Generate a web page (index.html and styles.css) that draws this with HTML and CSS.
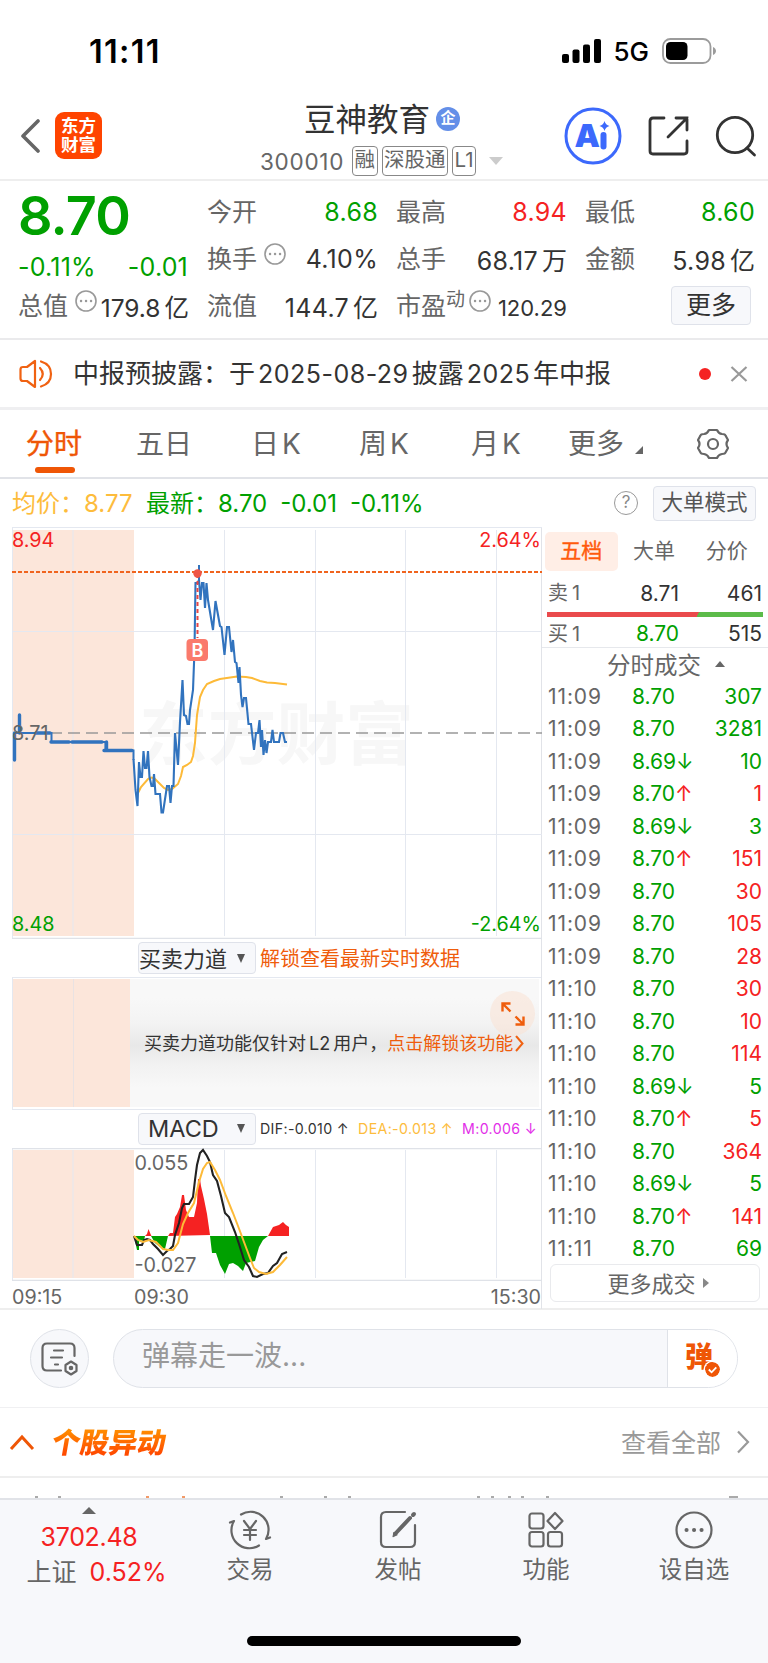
FILE: index.html
```html
<!DOCTYPE html>
<html lang="zh-CN">
<head>
    <meta charset="UTF-8">
    <meta name="viewport" content="width=device-width, initial-scale=1.0">
    <title>豆神教育 300010</title>
    <link rel="stylesheet" href="styles.css">
</head>
<body>
    <!-- Status bar -->
    <div class="status-bar">
        <span class="status-time">11:11</span>
        <div class="status-right">
            <svg width="39" height="24" viewBox="0 0 39 24"><rect x="0" y="15" width="7" height="9" rx="2"/><rect x="10.500" y="10.500" width="7" height="13.500" rx="2"/><rect x="21" y="5.500" width="7" height="18.500" rx="2"/><rect x="32" y="0" width="7" height="24" rx="2"/></svg>
            <span class="status-net">5G</span>
            <svg width="54" height="26" viewBox="0 0 54 26"><rect x="1" y="1" width="47.500" height="24" rx="7.500" fill="none" stroke="#9b9b9b" stroke-width="1.800"/><rect x="4" y="4" width="21.500" height="18" rx="4.500"/><path d="M51 9c4 2 4 6 0 8z" fill="#9b9b9b"/></svg>
        </div>
    </div>

    <!-- Header -->
    <div class="header">
        <div class="header-left">
            <svg width="20" height="34" viewBox="0 0 20 34"><path d="M18 2L3 17l15 15" fill="none" stroke="#666" stroke-width="3.600" stroke-linecap="round" stroke-linejoin="round"/></svg>
            <div class="logo"><span>东方</span><span>财富</span></div>
        </div>
        <div class="header-title">
            <div class="stock-name">豆神教育<span class="corp">企</span></div>
            <div class="stock-code">300010<span class="tag tag-first">融</span><span class="tag">深股通</span><span class="tag">L1</span><i class="drop"></i></div>
        </div>
        <div class="header-right">
            <svg width="58" height="58" viewBox="0 0 58 58"><circle cx="29" cy="29" r="27" fill="none" stroke="#3c69fc" stroke-width="3"/><text x="10.500" y="40" class="ai-text">A</text><path d="M39.500 28v11.500" stroke="#3c69fc" stroke-width="6" stroke-linecap="round"/><path d="M40.500 14q1 4 5 5-4 1-5 5-1-4-5-5 4-1 5-5z" fill="#3c69fc"/></svg>
            <svg width="42" height="42" viewBox="0 0 42 42" fill="none" stroke="#333" stroke-width="2.800" stroke-linecap="round"><path d="M16 3H5Q2 3 2 6v30q0 3 3 3h31q3 0 3-3V26M20 22L39 3M28 3h11v12"/></svg>
            <svg width="42" height="42" viewBox="0 0 42 42" fill="none" stroke="#333" stroke-width="2.800" stroke-linecap="round"><circle cx="20" cy="20" r="17.700"/><path d="M32 33l7.500 7"/></svg>
        </div>
    </div>

    <!-- Quote -->
    <div class="quote">
        <div class="quote-main">
            <div class="price green">8.70</div>
            <div class="change green"><span>-0.11%</span><span>-0.01</span></div>
            <div class="cell"><label>总值</label><svg class="more-dot" viewBox="0 0 22 22"><circle cx="11" cy="11" r="10"/><path d="M6 11h.1M11 11h.1M16 11h.1"/></svg><b class="num-small">179.8<em>亿</em></b></div>
        </div>
        <div class="quote-col">
            <div class="cell"><label>今开</label><b class="green">8.68</b></div>
            <div class="cell"><label>换手</label><svg class="more-dot" viewBox="0 0 22 22"><circle cx="11" cy="11" r="10"/><path d="M6 11h.1M11 11h.1M16 11h.1"/></svg><b>4.10%</b></div>
            <div class="cell"><label>流值</label><b>144.7<em>亿</em></b></div>
        </div>
        <div class="quote-col">
            <div class="cell"><label>最高</label><b class="red">8.94</b></div>
            <div class="cell"><label>总手</label><b>68.17<em>万</em></b></div>
            <div class="cell"><label>市盈<sup>动</sup></label><svg class="more-dot near" viewBox="0 0 22 22"><circle cx="11" cy="11" r="10"/><path d="M6 11h.1M11 11h.1M16 11h.1"/></svg><b class="num-tiny">120.29</b></div>
        </div>
        <div class="quote-col">
            <div class="cell"><label>最低</label><b class="green">8.60</b></div>
            <div class="cell"><label>金额</label><b>5.98<em>亿</em></b></div>
            <div class="cell"><button class="btn-more">更多</button></div>
        </div>
    </div>

    <!-- Notice -->
    <div class="notice">
        <svg width="34" height="30" viewBox="0 0 34 30" fill="none" stroke="#f06212" stroke-width="2.200" stroke-linejoin="round" stroke-linecap="round"><path d="M16 2v26L8 22H4q-2.500 0-2.500-2.500v-9Q1.500 8 4 8h4zM21 9q5.500 6 0 12M22 2.500q10 3 10 12.500T22 27.500"/></svg>
        <span class="notice-text">中报预披露：于<em>2025-08-29</em>披露<em>2025</em>年中报</span>
        <i class="dot"></i>
        <svg width="18" height="18" viewBox="0 0 18 18"><path d="M1.500 2l15 14M16.500 2l-15 14" stroke="#999" stroke-width="2.200"/></svg>
    </div>

    <!-- Tabs -->
    <div class="tabs">
        <span class="tab active">分时</span>
        <span class="tab">五日</span>
        <span class="tab">日<em>K</em></span>
        <span class="tab">周<em>K</em></span>
        <span class="tab">月<em>K</em></span>
        <span class="tab">更多<i class="corner"></i></span>
        <svg width="32" height="32" viewBox="0 0 32 32" fill="none" stroke="#666" stroke-width="2.200" stroke-linejoin="round"><path d="M12 2h8q1.500 3.500 5 4 3 0 3.500 1.500L31 12q-3 4 0 8l-2.500 4.500Q28 26 25 26q-3.500.500-5 4h-8q-1.500-3.500-5-4-3 0-3.500-1.500L1 20q3-4 0-8l2.500-4.500Q4 6 7 6q3.500-.500 5-4z"/><circle cx="16" cy="16" r="5"/></svg>
    </div>

    <!-- Average / last -->
    <div class="info">
        <span class="avg">均价：<em>8.77</em></span>
        <span class="last green">最新：<em>8.70</em><em>-0.01</em><em>-0.11%</em></span>
        <span class="help">?</span>
        <button class="btn-mode">大单模式</button>
    </div>

    <div class="market">
        <div class="charts">
            <svg class="chart" width="530" height="412" viewBox="12 527 530 412">
                <rect x="12" y="530" width="122" height="406" fill="#fce6da"/>
                <text x="139" y="759" class="watermark" textLength="275" lengthAdjust="spacingAndGlyphs">东方财富</text>
                <path d="M12 527.500h530M12.500 527v412M12 631.500h530M12 834.500h530M73 530v406M224.500 530v406M315.500 530v406M405.500 530v406M496.500 530v406" class="grid"/>
                <path d="M12 938.500h530" class="frame"/>
                <path d="M12 572h530" stroke="#f0641e" stroke-width="2" stroke-dasharray="4 2"/>
                <path d="M14 733h528" stroke="#999" stroke-width="1.600" stroke-dasharray="12 6"/>
                <polyline class="line-avg" points="138,793 141,787 148,779 151,777.500 154,778 158,782 164,788 168,790 172,789 178,784 181,776 183,767 187,765 191,762 193,756 195,743 197,715 200,697 203,690 207,684 214,681 220,679 237,676.500 246,677 252,678 260,681 267,682.500 275,683 287,684.500"/>
                <path class="line-pre" d="M14.500 760V733"/>
                <path class="line-pre" d="M19.500 733V715"/>
                <path class="line-step" d="M14 733H51.500V742H105.500V750.500H133.500V760"/>
                <path class="line-pre" d="M36 733h14M51 742h18M72 742h30M106.500 742v8.500M104 750.500h28"/>
                <polyline class="line-price" points="133.500,759 135.500,790 137.500,806 139,762 140.500,777 142,777 143.500,751 145,768 146.500,768 148,751 149.500,777 151.500,786 153,786 154,774 155.500,794 160,794 161.500,812.500 163,812.500 167,786 169,786 170.500,803 172,786 173.500,786 175,733 178,765 180,722 182.500,680 184,715 186,716 187.500,724 189,724 190,710 193,690 194.500,650 195.500,583 197.500,583 199,580 200.500,600 202,583 203.500,583 205,608 206.500,583 208,600 213,630 215.500,601 220,626 221.500,627 224.500,655 227,627 229,627 231.500,652 233,640 235,662 236.500,663 238.500,683 239.500,667 241,695 242.500,707 244,698 246,698 248.500,724 251,724 254,750 256,733 258,733 259.500,720 261,747 262,730 263.500,755 265,740 266.500,753 268,742 271,742 272.500,730 274,742 279,742 280.500,733 283,733 285,742 287,742"/>
                <path d="M199 565v18" stroke="#3173be" stroke-width="2"/>
                <path d="M197.500 574v64" stroke="#e64545" stroke-width="2" stroke-dasharray="4 3"/>
                <circle cx="197.500" cy="573.500" r="4.200" fill="#ee5647"/>
                <rect x="186.500" y="639" width="21.500" height="22" rx="4" fill="#fa7a6c"/>
                <text x="197.500" y="657" class="buy">B</text>
                <text x="12" y="547" class="axis" fill="#f52222">8.94</text>
                <text x="12" y="740" class="axis" fill="#666">8.71</text>
                <text x="12" y="931" class="axis" fill="#00a000">8.48</text>
                <text x="541" y="547" class="axis end" fill="#f52222">2.64%</text>
                <text x="541" y="931" class="axis end" fill="#00a000">-2.64%</text>
            </svg>

            <div class="sub-head">
                <span class="select"><em>买卖力道</em><i class="caret"></i></span>
                <span class="unlock">解锁查看最新实时数据</span>
            </div>
            <div class="force">
                <div class="force-pre"></div>
                <div class="force-body">
                    <span>买卖力道功能仅针对<em>L2</em>用户，<a>点击解锁该功能<svg width="9" height="17" viewBox="0 0 9 17"><path d="M1 1l6.500 7.500L1 16" fill="none" stroke="#f06212" stroke-width="2"/></svg></a></span>
                    <div class="expand"><svg width="24" height="24" viewBox="0 0 24 24" fill="none" stroke="#ef5d0c" stroke-width="2.400"><path d="M1.500 9.500v-8h8M1.500 1.500l8 8M22.500 14.500v8h-8M22.500 22.500l-8-8"/></svg></div>
                </div>
            </div>
            <div class="sub-head macd-head">
                <span class="select macd">MACD<i class="caret"></i></span>
                <span class="macd-vals"><span>DIF:-0.010 ↑</span><span class="dea">DEA:-0.013 ↑</span><span class="m">M:0.006 ↓</span></span>
            </div>
            <svg class="chart" width="530" height="133" viewBox="12 1148 530 133">
                <rect x="12" y="1150" width="122" height="128" fill="#fce6da"/>
                <path d="M12.500 1148v133M73 1150v128M224.500 1150v128M315.500 1150v128M405.500 1150v128M496.500 1150v128" class="grid"/>
                <path d="M12 1148.500h530M12 1280.500h530" class="frame"/>
                <path fill="#f52222" d="M145 1236l2-2 1.500-5 2 5 1 2zM168 1236l2-3h3l2-16 2-3 3-7 2-12h2l2 15 3 7h5l3-14 1-24h2l1 7 3 13 3 15 3 21zM268 1236l5-9 6-2 4-3 3 3 3 2v9z"/>
                <path fill="#00a000" d="M134 1236l3 14h2v-10l5 1 1-5zM151 1236l4 7 5 4 5 2 3-13zM210 1236l2 17h4l4 12 5 9 4-10 4-1 5 3 5 5 3-8 9-2 4-14 4-7 5-4z"/>
                <polyline class="line-dif" points="134,1236 137,1245 142,1245 144,1240 147,1239 150,1240 153,1244 158,1249 163,1255 167,1251 170,1249 173,1246 175,1235 179,1223 182,1208 184,1204 189,1204 193,1197 195,1180 197,1165 200,1153 203,1150 207,1156 210,1162 213,1175 217,1181 221,1196 225,1213 229,1217 235,1232 239,1244 244,1260 249,1267 253,1276 257,1277 263,1274 268,1273 273,1266 277,1263 282,1254 287,1252"/>
                <polyline class="line-avg" points="134,1236 138,1240 143,1242 149,1240 156,1242 163,1249 168,1250 173,1250 178,1243 183,1224 188,1213 194,1203 199,1182 203,1169 207,1163 210,1162 215,1170 220,1180 226,1196 233,1213 238,1226 244,1242 250,1258 254,1268 259,1272 266,1274 273,1272 280,1265 287,1257"/>
                <text x="134.500" y="1170" class="axis" fill="#666">0.055</text>
                <text x="134.500" y="1272" class="axis" fill="#666">-0.027</text>
            </svg>
            <div class="times"><span>09:15</span><span>09:30</span><span>15:30</span></div>
        </div>

        <div class="side">
            <div class="side-tabs"><span class="side-tab active">五档</span><span class="side-tab">大单</span><span class="side-tab">分价</span></div>
            <div class="level"><span>卖<em>1</em></span><b>8.71</b><b>461</b></div>
            <div class="ratio"></div>
            <div class="level buy-level"><span>买<em>1</em></span><b class="green">8.70</b><b>515</b></div>
            <div class="side-title">分时成交<i class="up"></i></div>
            <div class="trades">
                <div class="trade"><span>11:09</span><b>8.70</b><b class="green">307</b></div>
                <div class="trade"><span>11:09</span><b>8.70</b><b class="green">3281</b></div>
                <div class="trade"><span>11:09</span><b>8.69<i class="down">↓</i></b><b class="green">10</b></div>
                <div class="trade"><span>11:09</span><b>8.70<i class="rise">↑</i></b><b class="red">1</b></div>
                <div class="trade"><span>11:09</span><b>8.69<i class="down">↓</i></b><b class="green">3</b></div>
                <div class="trade"><span>11:09</span><b>8.70<i class="rise">↑</i></b><b class="red">151</b></div>
                <div class="trade"><span>11:09</span><b>8.70</b><b class="red">30</b></div>
                <div class="trade"><span>11:09</span><b>8.70</b><b class="red">105</b></div>
                <div class="trade"><span>11:09</span><b>8.70</b><b class="red">28</b></div>
                <div class="trade"><span>11:10</span><b>8.70</b><b class="red">30</b></div>
                <div class="trade"><span>11:10</span><b>8.70</b><b class="red">10</b></div>
                <div class="trade"><span>11:10</span><b>8.70</b><b class="red">114</b></div>
                <div class="trade"><span>11:10</span><b>8.69<i class="down">↓</i></b><b class="green">5</b></div>
                <div class="trade"><span>11:10</span><b>8.70<i class="rise">↑</i></b><b class="red">5</b></div>
                <div class="trade"><span>11:10</span><b>8.70</b><b class="red">364</b></div>
                <div class="trade"><span>11:10</span><b>8.69<i class="down">↓</i></b><b class="green">5</b></div>
                <div class="trade"><span>11:10</span><b>8.70<i class="rise">↑</i></b><b class="red">141</b></div>
                <div class="trade"><span>11:11</span><b>8.70</b><b class="green">69</b></div>
            </div>
            <button class="btn-trades"><span>更多成交</span><i class="right"></i></button>
        </div>
    </div>

    <!-- Comment bar -->
    <div class="comment">
        <div class="comment-set">
            <svg width="38" height="34" viewBox="0 0 38 34" fill="none" stroke="#666" stroke-width="2.200" stroke-linecap="round" stroke-linejoin="round"><path d="M33.500 14V6q0-4.500-4.500-4.500H6Q1.500 1.500 1.500 6v18q0 4.500 4.500 4.500h14M13 8.500h9M10 15.500h11M14 22.500h3M30 19.500l5.500 3.500v6L30 32.500 24.500 29v-6z"/><circle cx="30" cy="26" r="1.200"/></svg>
        </div>
        <div class="comment-input">
            <span>弹幕走一波...</span>
            <div class="danmu">弹<svg width="15" height="15" viewBox="0 0 15 15"><circle cx="7.500" cy="7.500" r="7.500" fill="#ef5606"/><path d="M3.800 7.500l2.800 2.800 4.700-5" fill="none" stroke="#fff" stroke-width="1.800"/></svg></div>
        </div>
    </div>

    <!-- Stock alerts -->
    <div class="alerts">
        <svg width="26" height="17" viewBox="0 0 26 17"><path d="M2 15L13 3l11 12" fill="none" stroke="#ef5606" stroke-width="3"/></svg>
        <span class="alerts-title">个股异动</span>
        <span class="alerts-all">查看全部</span>
        <svg width="14" height="24" viewBox="0 0 14 24"><path d="M2 1.500L12 12 2 22.500" fill="none" stroke="#999" stroke-width="2.200"/></svg>
    </div>
    <div class="peek">
        <svg width="768" height="2" viewBox="0 0 768 2"><path d="M35 1h3M58 1h3M280 1h3M324 1h3M348 1h3M477 1h3M491 1h3M508 1h3M521 1h3M546 1h3M729 1h9" stroke="#aaa" stroke-width="2"/><path d="M146 1h3M182 1h3" stroke="#f29a68" stroke-width="2"/></svg>
    </div>

    <!-- Bottom bar -->
    <div class="bottom">
        <div class="index">
            <i class="up"></i>
            <span class="red">3702.48</span>
            <div>上证<b class="red">0.52%</b></div>
        </div>
        <div class="nav">
            <div class="nav-item">
                <svg width="44" height="40" viewBox="0 0 44 40" fill="none" stroke="#666" stroke-width="2.200" stroke-linecap="round" stroke-linejoin="round"><path d="M13 4.500A18 18 0 0 1 38 29l4-1.500M31 35.500A18 18 0 0 1 6 11l-4 1.500M16 11l6 8 6-8M22 19v11M16 20h12M16 25h12"/></svg>
                <span>交易</span>
            </div>
            <div class="nav-item">
                <svg width="40" height="40" viewBox="0 0 40 40" fill="none" stroke="#666" stroke-width="2.200" stroke-linecap="round"><path d="M27 2H8Q3 2 3 7v25q0 5 5 5h24q5 0 5-5V15"/><path d="M17 24L32 8" stroke-width="4"/><path d="M15 26.500l1-4.500 3 2.500z" fill="#666" stroke-width="1"/><path d="M35 5l1-1" stroke-width="4"/></svg>
                <span>发帖</span>
            </div>
            <div class="nav-item">
                <svg width="40" height="40" viewBox="0 0 40 40" fill="none" stroke="#666" stroke-width="2.200" stroke-linejoin="round"><rect x="3.500" y="3.500" width="14" height="15" rx="2.500"/><rect x="3.500" y="22" width="14" height="14.500" rx="2.500"/><rect x="22" y="22" width="14" height="14.500" rx="2.500"/><path d="M29 3l7.500 8L29 19l-7.500-8z"/></svg>
                <span>功能</span>
            </div>
            <div class="nav-item">
                <svg width="40" height="40" viewBox="0 0 40 40" fill="none" stroke="#666" stroke-width="2.200"><circle cx="20" cy="20" r="17.500"/><path d="M12.500 20h.1M20 20h.1M27.500 20h.1" stroke-width="4" stroke-linecap="round"/></svg>
                <span>设自选</span>
            </div>
        </div>
        <div class="home"></div>
    </div>
</body>
</html>
```
FILE: styles.css
```css
* { box-sizing: border-box; }
body { margin: 0; width: 768px; height: 1663px; overflow: hidden; background: #fff; color: #333; font-family: Inter, "Noto Sans CJK SC", sans-serif; }
em, i, b { font-style: normal; font-weight: 400; }
svg { display: block; flex: none; }
button { font-family: inherit; padding: 0; background: #f7f8fb; border: 1.5px solid #dfe2ea; border-radius: 4px; color: #333; }
.green { color: #00a000; }
.red { color: #f52222; }

.status-bar { height: 92px; padding: 12px 52px 0 89px; display: flex; justify-content: space-between; align-items: center; color: #000; }
.status-time { font-size: 32.5px; font-weight: 600; letter-spacing: 1.3px; line-height: 40px; }
.status-right { display: flex; align-items: center; margin-top: -2px; }
.status-net { font-size: 26px; font-weight: 500; margin: 1px 13px 0 12px; }

.header { height: 89px; border-bottom: 2px solid #eee; display: grid; grid-template-columns: 180px 1fr 204px; }
.header-left { display: flex; align-items: center; gap: 15px; padding: 0 0 1px 20px; height: 88px; }
.logo { width: 47px; height: 47px; border-radius: 9px; background: #ff4400; color: #fff; display: flex; flex-direction: column; align-items: center; justify-content: center; font-size: 17.5px; line-height: 19px; font-weight: 700; padding-bottom: 1px; }
.header-title { padding-left: 80px; white-space: nowrap; }
.stock-name { display: flex; align-items: center; height: 48px; padding: 1px 0 0 44px; font-size: 31.5px; }
.corp { width: 24px; height: 24px; margin: 4px 0 0 6px; border-radius: 50%; background: #648fe8; color: #fff; font-size: 15px; line-height: 22px; font-weight: 700; text-align: center; }
.stock-code { display: flex; align-items: center; height: 42px; font-size: 22.5px; letter-spacing: 0.7px; color: #666; }
.tag { height: 30px; line-height: 26px; padding: 0 1.5px; border: 1.5px solid #888; border-radius: 4px; font-size: 20.5px; letter-spacing: 0; margin-left: 4px; }
.tag-first { margin-left: 8px; }
.drop { border: 7px solid transparent; border-top: 8px solid #ccc; border-bottom: 0; margin-left: 13px; }
.header-right { display: flex; align-items: center; gap: 25.5px; height: 88px; }
.ai-text { font-size: 32px; font-weight: 900; fill: #3c69fc; }

.quote { height: 159px; padding: 7px 14px 0 18px; border-bottom: 2px solid #eaeaec; display: grid; grid-template-columns: 170px 169px 169px 168px; column-gap: 20px; }
.price { height: 57px; line-height: 56px; font-size: 54px; font-weight: 600; letter-spacing: -0.8px; }
.change { display: flex; justify-content: space-between; height: 37px; line-height: 44px; font-size: 25px; letter-spacing: 0.2px; }
.cell { display: flex; align-items: center; height: 47px; font-size: 25px; white-space: nowrap; }
.cell label { color: #666; padding-bottom: 3px; margin-left: -1px; }
.quote-main .cell label { margin-left: 0; }
.cell b { margin: 0 -1px 0 auto; letter-spacing: 0.3px; }
.cell b em { margin-left: 4px; letter-spacing: 0; }
.cell .num-small { font-size: 24.5px; padding-top: 2px; letter-spacing: 0; }
.cell .num-tiny { font-size: 22px; padding-top: 4px; letter-spacing: 0; }
.cell sup { font-size: 19px; line-height: 0; vertical-align: 9px; }
.more-dot { width: 22px; height: 22px; margin: -9px 0 0 7px; fill: none; stroke: #999; stroke-width: 1.6; }
.more-dot path { stroke-width: 2.4; stroke-linecap: round; }
.more-dot.near { margin-left: 4px; }
.btn-more { width: 80px; height: 39px; margin-left: 85px; font-size: 25px; line-height: 34px; padding-bottom: 2px; }

.notice { height: 70px; border-bottom: 3px solid #efeff1; display: flex; align-items: center; padding: 0 20px 0 19px; }
.notice-text { margin-left: 20px; font-size: 26px; white-space: nowrap; padding-bottom: 4px; }
.notice-text em { font-size: 25px; margin: 0 3px; letter-spacing: 0.5px; }
.dot { width: 12px; height: 12px; border-radius: 50%; background: #f52222; margin: 0 19px 0 auto; }

.tabs { height: 69px; border-bottom: 2px solid #e1e3e8; display: grid; grid-template-columns: 110px 115px 108px 112px 97px 129px 32px; align-items: center; padding-left: 26px; font-size: 28px; color: #666; }
.tab { position: relative; white-space: nowrap; padding-bottom: 3px; }
.tab em { margin-left: 3px; }
.tab.active { color: #ef5606; -webkit-text-stroke: 0.4px #ef5606; }
.tab.active::after { content: ""; position: absolute; left: 9px; bottom: -8px; width: 40px; height: 6px; border-radius: 3px; background: #ef5606; }
.corner { display: inline-block; margin-left: 11px; border-left: 8px solid transparent; border-bottom: 8px solid #666; }

.info { height: 48px; display: flex; align-items: center; padding: 0 12px 0 12px; font-size: 24px; white-space: nowrap; }
.avg, .last { padding-bottom: 3px; }
.avg { width: 134px; color: #fdbc3c; }
.info em { margin-right: 13px; }
.help { width: 24px; height: 24px; border: 1.6px solid #999; border-radius: 50%; color: #888; font-size: 17px; line-height: 21px; text-align: center; margin: 0 15px 0 auto; }
.btn-mode { width: 103px; height: 35px; font-size: 21.5px; line-height: 30px; color: #555; padding-bottom: 2px; }

.market { height: 783px; display: grid; grid-template-columns: 530px 226px; padding-left: 12px; border-bottom: 2px solid #eee; }
.charts { border-right: 1.5px solid #e1e3e8; }
.grid { stroke: #e4e8f0; stroke-width: 1; fill: none; }
.frame { stroke: #dfe2e8; stroke-width: 1.5; fill: none; }
.watermark { font-size: 68px; font-weight: 700; fill: #f7f7f7; }
.line-avg { fill: none; stroke: #fdba38; stroke-width: 2; }
.line-price { fill: none; stroke: #3173be; stroke-width: 2.1; }
.line-step { fill: none; stroke: #3173be; stroke-width: 2; }
.line-pre { fill: none; stroke: #3173be; stroke-width: 3.4; stroke-linecap: round; }
.line-dif { fill: none; stroke: #222; stroke-width: 2.1; }
.buy { font-size: 18px; font-weight: 600; fill: #fff; text-anchor: middle; }
.axis { font-size: 19.8px; }
.end { text-anchor: end; }

.sub-head { height: 38px; display: flex; align-items: center; padding-left: 126px; white-space: nowrap; }
.select { width: 118px; height: 32px; flex: none; border: 1.5px solid #dfe2ea; border-radius: 4px; background: #f7f8fb; display: flex; align-items: center; justify-content: space-between; padding-right: 10px; font-size: 22px; }
.select em { padding-bottom: 3px; }
.select.macd { padding-left: 9px; font-size: 23.5px; }
.caret { border: 4.5px solid transparent; border-top: 9px solid #555; border-bottom: 0; }
.unlock { margin-left: 4px; font-size: 20px; color: #ef5d0c; padding-bottom: 2px; }
.force { height: 133px; display: flex; padding: 1px 2px 2px 0; border: solid #e4e8f0; border-width: 1px 0 1.5px 1px; }
.force-pre { width: 117px; background: linear-gradient(90deg, transparent 60px, #e9e2e2 60px, #e9e2e2 61px, transparent 61px), #fce6da; }
.force-body { position: relative; flex: 1; display: flex; align-items: center; padding: 0 0 2px 14px; font-size: 18px; white-space: nowrap; background: linear-gradient(#f8f8f8 15%, #f3f3f3 35%, #e8e8e8 52%, #f2f2f2 68%, #f8f8f8 85%); }
.force-body em { margin: 0 3px; }
.force-body a { color: #ef5d0c; }
.force-body a svg { display: inline-block; margin-left: 2px; vertical-align: -2px; }
.expand { position: absolute; right: 4px; top: 12px; width: 45px; height: 45px; border-radius: 50%; background: rgba(250, 225, 212, 0.55); display: flex; align-items: center; justify-content: center; }
.macd-head { padding-bottom: 1px; }
.macd-vals { display: flex; gap: 9px; margin-left: 4px; font-size: 14.2px; letter-spacing: 0.35px; }
.dea { color: #fdbc3c; }
.m { color: #e22ee8; }
.times { height: 28px; display: grid; grid-template-columns: 122px 1fr auto; align-items: center; padding: 3px 0 0; font-size: 19.7px; color: #666; }

.side { padding: 5px 5px 0 4px; }
.side-tabs { display: flex; height: 39px; font-size: 21px; color: #666; margin-left: -1px; }
.side-tab { width: 73px; line-height: 37px; border-radius: 5px; text-align: center; }
.side-tab.active { background: #ffeee6; color: #ff5a0c; -webkit-text-stroke: 0.4px #ff5a0c; }
.level { display: grid; grid-template-columns: 55px 76px 1fr; height: 41px; line-height: 45px; padding: 0 1px 0 2px; font-size: 21px; color: #333; }
.level span { color: #666; font-size: 20px; }
.level span em { margin-left: 4px; }
.level b, .trade b:last-child { text-align: right; }
.ratio { height: 5px; margin-left: 1px; background: linear-gradient(120deg, #ea4a4c 69.5%, #5cbb49 69.5%); }
.buy-level { height: 30px; line-height: 34px; }
.side-title { margin: 0 -5px 0 -4px; border-top: 1.5px solid #e6e8ec; height: 33px; display: flex; justify-content: center; align-items: center; gap: 14px; font-size: 23.5px; color: #666; padding-left: 22px; }
.up { border: 5px solid transparent; border-bottom: 6px solid #666; border-top: 0; }
.trade { display: grid; grid-template-columns: 84px 1fr 60px; height: 32.47px; line-height: 34px; padding: 0 1px 0 2px; font-size: 21px; color: #666; }
.trade span { letter-spacing: 0.9px; }
.trade b:nth-child(2) { color: #00a000; white-space: nowrap; }
.trade .rise { color: #f52222; }
.btn-trades { display: flex; align-items: center; justify-content: center; gap: 7px; width: 210px; height: 38px; margin: 0 0 0 4px; border-radius: 6px; background: #fff; border-color: #e9eaed; font-size: 22px; color: #666; padding-left: 6px; }
.btn-trades span { padding-bottom: 3px; }
.right { border: 5px solid transparent; border-left: 6px solid #888; border-right: 0; }

.comment { height: 98px; display: flex; padding: 19px 30px 0; gap: 24px; border-bottom: 1.5px solid #f0f0f2; }
.comment-set { width: 59px; height: 59px; flex: none; border: 1.5px solid #dfe2e8; border-radius: 50%; background: #f7f8fb; display: flex; align-items: center; justify-content: center; }
.comment-input { width: 625px; height: 59px; border: 1.5px solid #dfe2e8; border-radius: 30px; background: #f7f8fb; display: flex; justify-content: space-between; overflow: hidden; font-size: 28px; line-height: 53px; color: #999; padding-left: 28px; }
.danmu { position: relative; width: 70px; background: #fff; border-left: 1.5px solid #dfe2e8; padding-left: 17px; font-size: 28px; font-weight: 900; color: #ef5606; line-height: 54px; }
.danmu svg { position: absolute; left: 37px; top: 32px; border-radius: 50%; box-shadow: 0 0 0 1.5px #fff; }
.alerts { height: 70px; border-bottom: 2px solid #eee; display: flex; align-items: center; padding: 0 18px 0 9px; }
.alerts-title { margin-left: 17px; padding-bottom: 4px; font-size: 28.5px; font-weight: 900; transform: skewX(-10deg); background: linear-gradient(#ff8a00 25%, #ff4a00 75%); -webkit-background-clip: text; background-clip: text; color: transparent; }
.alerts-all { margin: 0 15px 0 auto; padding-bottom: 3px; font-size: 25px; color: #999; }
.peek { height: 20px; padding-top: 18px; }

.bottom { position: relative; height: 166px; border-top: 2px solid #e1e3e8; background: #f7f8fb; display: grid; grid-template-columns: 176px 592px; color: #666; }
.index { display: flex; flex-direction: column; align-items: center; padding: 7px 0 0 2px; font-size: 25px; }
.index .up { border-width: 0 7px 7px; }
.index span { line-height: 30px; margin-top: 8px; letter-spacing: -0.3px; }
.index div { line-height: 36px; margin-top: 2px; padding-left: 15px; }
.index b { margin-left: 13px; }
.nav { display: grid; grid-template-columns: repeat(4, 148px); }
.nav-item { display: flex; flex-direction: column; align-items: center; padding-top: 10px; font-size: 23.5px; }
.nav-item span { line-height: 36px; margin-top: 2px; }
.home { position: absolute; left: 247px; bottom: 18px; width: 274px; height: 10px; border-radius: 5px; background: #000; }
```
